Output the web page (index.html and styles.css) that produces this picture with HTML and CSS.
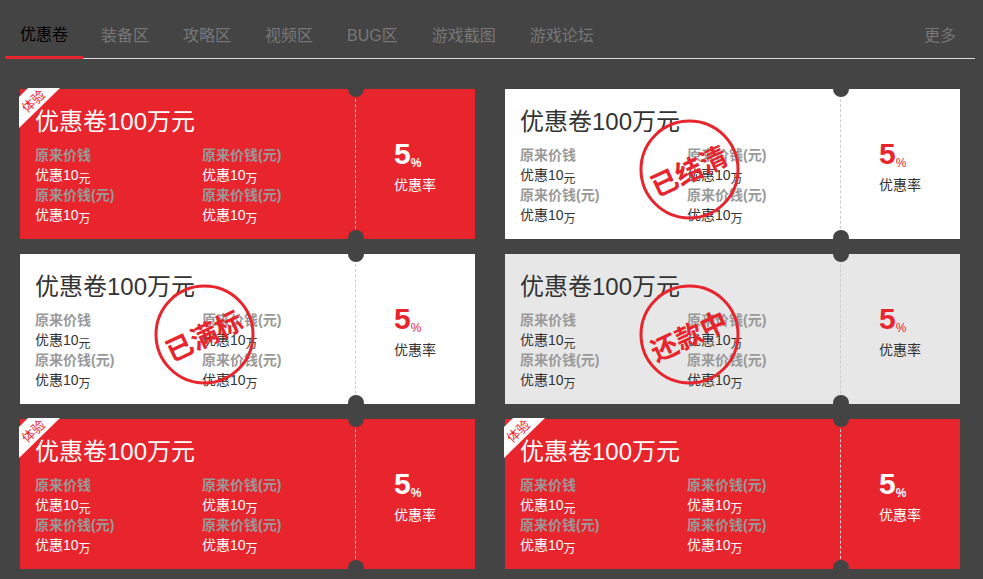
FILE: index.html
```html
<!DOCTYPE html>
<html lang="zh-CN">
<head>
<meta charset="utf-8">
<title>优惠卷</title>
<link rel="stylesheet" href="styles.css">
</head>
<body>
<nav class="tabs">
  <a class="tab active" href="#">优惠卷</a>
  <a class="tab" href="#">装备区</a>
  <a class="tab" href="#">攻略区</a>
  <a class="tab" href="#">视频区</a>
  <a class="tab" href="#">BUG区</a>
  <a class="tab" href="#">游戏截图</a>
  <a class="tab" href="#">游戏论坛</a>
  <a class="tab more" href="#">更多</a>
</nav>
<main class="coupons">
  <article class="coupon red">
    <svg class="ribbon" viewBox="0 0 41 40"><polygon points="9,0 41,0 0,40 0,9"/><text x="14" y="18" transform="rotate(-43 14 13)">体验</text></svg>
    <div class="info">
      <h2>优惠卷100万元</h2>
      <div class="prices">
        <dl><dt>原来价钱</dt><dd>优惠10<sub>元</sub></dd><dt>原来价钱(元)</dt><dd>优惠10<sub>万</sub></dd></dl>
        <dl><dt>原来价钱(元)</dt><dd>优惠10<sub>万</sub></dd><dt>原来价钱(元)</dt><dd>优惠10<sub>万</sub></dd></dl>
      </div>
    </div>
    <div class="rate"><p class="value">5<sub>%</sub></p><p>优惠率</p></div>
  </article>
  <article class="coupon">
    <div class="info">
      <h2>优惠卷100万元</h2>
      <div class="prices">
        <dl><dt>原来价钱</dt><dd>优惠10<sub>元</sub></dd><dt>原来价钱(元)</dt><dd>优惠10<sub>万</sub></dd></dl>
        <dl><dt>原来价钱(元)</dt><dd>优惠10<sub>万</sub></dd><dt>原来价钱(元)</dt><dd>优惠10<sub>万</sub></dd></dl>
      </div>
    </div>
    <div class="rate"><p class="value">5<sub>%</sub></p><p>优惠率</p></div>
    <svg class="stamp" viewBox="0 0 100 100"><circle cx="49.5" cy="49.5" r="48.5"/><text x="49" y="61" transform="rotate(-25 49 51)">已结清</text></svg>
  </article>
  <article class="coupon">
    <div class="info">
      <h2>优惠卷100万元</h2>
      <div class="prices">
        <dl><dt>原来价钱</dt><dd>优惠10<sub>元</sub></dd><dt>原来价钱(元)</dt><dd>优惠10<sub>万</sub></dd></dl>
        <dl><dt>原来价钱(元)</dt><dd>优惠10<sub>万</sub></dd><dt>原来价钱(元)</dt><dd>优惠10<sub>万</sub></dd></dl>
      </div>
    </div>
    <div class="rate"><p class="value">5<sub>%</sub></p><p>优惠率</p></div>
    <svg class="stamp" viewBox="0 0 100 100"><circle cx="49.5" cy="49.5" r="48.5"/><text x="49" y="61" transform="rotate(-25 49 51)">已满标</text></svg>
  </article>
  <article class="coupon gray">
    <div class="info">
      <h2>优惠卷100万元</h2>
      <div class="prices">
        <dl><dt>原来价钱</dt><dd>优惠10<sub>元</sub></dd><dt>原来价钱(元)</dt><dd>优惠10<sub>万</sub></dd></dl>
        <dl><dt>原来价钱(元)</dt><dd>优惠10<sub>万</sub></dd><dt>原来价钱(元)</dt><dd>优惠10<sub>万</sub></dd></dl>
      </div>
    </div>
    <div class="rate"><p class="value">5<sub>%</sub></p><p>优惠率</p></div>
    <svg class="stamp" viewBox="0 0 100 100"><circle cx="49.5" cy="49.5" r="48.5"/><text x="49" y="61" transform="rotate(-25 49 51)">还款中</text></svg>
  </article>
  <article class="coupon red">
    <svg class="ribbon" viewBox="0 0 41 40"><polygon points="9,0 41,0 0,40 0,9"/><text x="14" y="18" transform="rotate(-43 14 13)">体验</text></svg>
    <div class="info">
      <h2>优惠卷100万元</h2>
      <div class="prices">
        <dl><dt>原来价钱</dt><dd>优惠10<sub>元</sub></dd><dt>原来价钱(元)</dt><dd>优惠10<sub>万</sub></dd></dl>
        <dl><dt>原来价钱(元)</dt><dd>优惠10<sub>万</sub></dd><dt>原来价钱(元)</dt><dd>优惠10<sub>万</sub></dd></dl>
      </div>
    </div>
    <div class="rate"><p class="value">5<sub>%</sub></p><p>优惠率</p></div>
  </article>
  <article class="coupon red">
    <svg class="ribbon" viewBox="0 0 41 40"><polygon points="9,0 41,0 0,40 0,9"/><text x="14" y="18" transform="rotate(-43 14 13)">体验</text></svg>
    <div class="info">
      <h2>优惠卷100万元</h2>
      <div class="prices">
        <dl><dt>原来价钱</dt><dd>优惠10<sub>元</sub></dd><dt>原来价钱(元)</dt><dd>优惠10<sub>万</sub></dd></dl>
        <dl><dt>原来价钱(元)</dt><dd>优惠10<sub>万</sub></dd><dt>原来价钱(元)</dt><dd>优惠10<sub>万</sub></dd></dl>
      </div>
    </div>
    <div class="rate"><p class="value">5<sub>%</sub></p><p>优惠率</p></div>
  </article>
</main>
</body>
</html>
```

FILE: styles.css
```css
* { box-sizing: border-box; }
body {
  margin: 0;
  padding: 15px 8px 10px 5px;
  background: #444;
  color: #333;
  font: 14px/20px "Liberation Sans", "Noto Sans CJK SC", sans-serif;
}
h2, p, dl, dd { margin: 0; }
sub { position: relative; bottom: -3px; font-size: 12px; line-height: 0; vertical-align: baseline; }

.tabs { display: flex; gap: 2px; border-bottom: 1px solid #ddd; }
.tab {
  padding: 11px 16px 12px;
  margin-bottom: -1px;
  color: #777;
  font-size: 16px;
  text-decoration: none;
}
.tab.active { padding: 10px 15px 11px; border-bottom: 3px solid #e8242d; color: #000; }
.tab.more { margin-left: auto; padding-right: 19px; }

.coupons {
  display: grid;
  grid-template-columns: 1fr 1fr;
  gap: 15px 30px;
  padding: 30px 15px 0;
}
.coupon { position: relative; display: flex; min-height: 150px; background: #fff; }
.gray { background: #e7e7e7; }
.red { background: #e8242d; color: #fff; }
.info { flex: 1; padding: 17px 0 0 15px; }
.info h2 { margin-bottom: 7px; font-size: 24px; line-height: 32px; font-weight: 400; }
.prices { display: grid; grid-template-columns: 1fr 1fr; }
dt { color: #999; font-weight: 700; }
.prices dl:last-child { padding-left: 7px; }

.rate { position: relative; width: 120px; padding: 49px 0 0 38px; border-left: 1px dashed #ccc; }
.rate::before, .rate::after {
  content: "";
  position: absolute;
  left: -8px;
  width: 16px;
  height: 16px;
  border-radius: 50%;
  background: #444;
}
.rate::before { top: -8px; }
.rate::after { bottom: -7px; }
.value { margin-bottom: 5px; color: #e8242d; font-size: 30px; line-height: 32px; font-weight: 700; }
.value sub { font-weight: 400; }
.red .value { color: #fff; }
.red .value sub { font-weight: 700; }

.ribbon { position: absolute; top: -1px; left: -1px; width: 41px; height: 40px; fill: #fff; }
.ribbon text { fill: #e8242d; font-size: 13px; text-anchor: middle; }
.stamp { position: absolute; top: 31px; left: 135px; width: 100px; height: 100px; overflow: visible; }
.stamp circle { fill: none; stroke: #e8242d; stroke-width: 3; }
.stamp text { fill: #e8242d; font-size: 27px; font-weight: 700; text-anchor: middle; }
```
